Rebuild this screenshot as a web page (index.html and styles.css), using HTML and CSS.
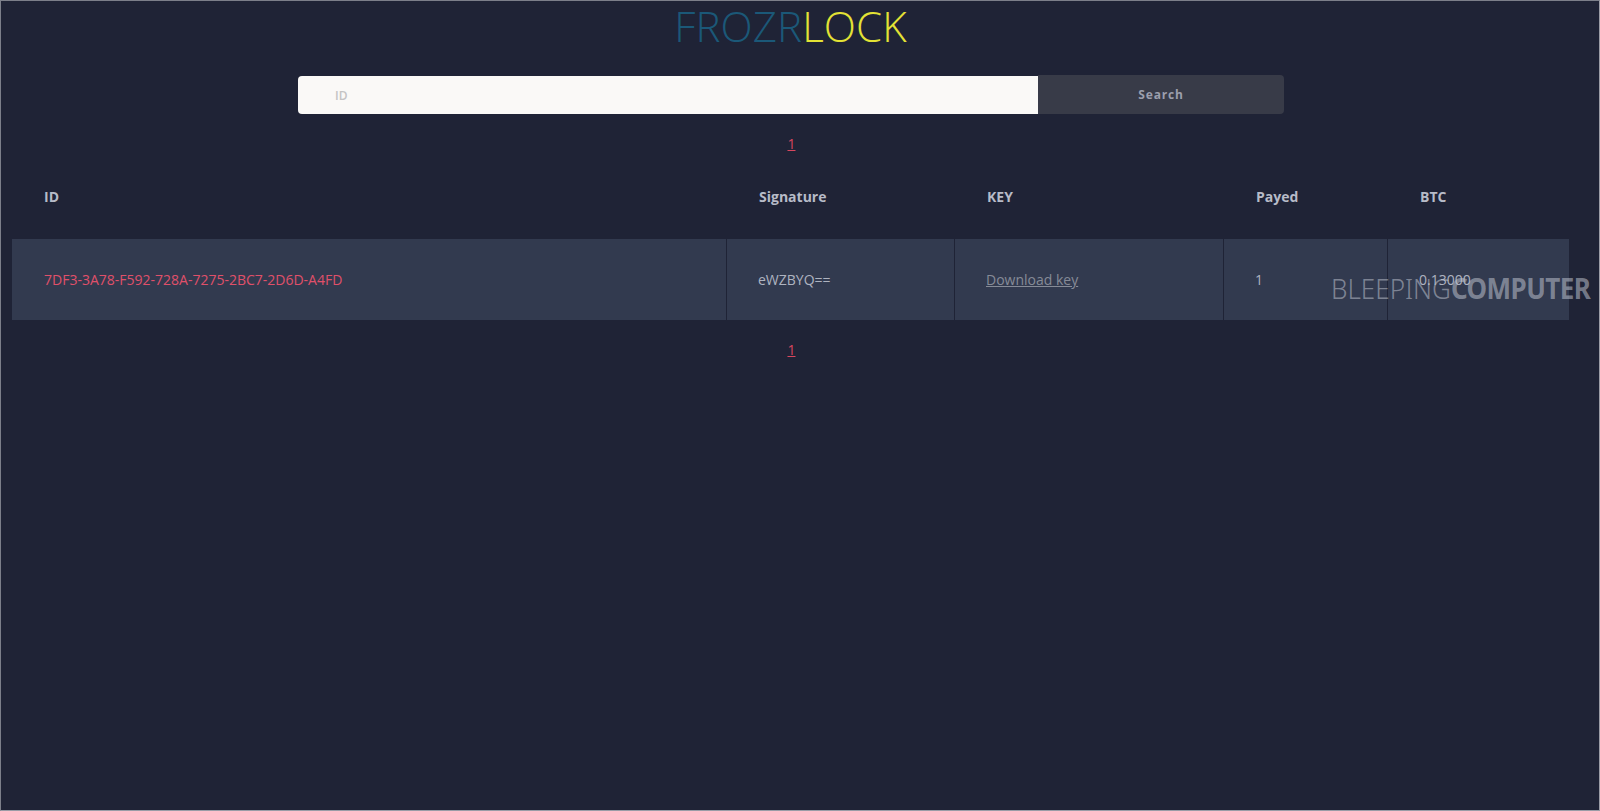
FILE: index.html
```html
<!DOCTYPE html>
<html>
<head>
<meta charset="utf-8">
<title>FrozrLock</title>
<link rel="stylesheet" href="styles.css">
</head>
<body>
<div class="frame">
  <header class="brand">
    <h1 class="logo"><span class="logo-a">FROZR</span><span class="logo-b">LOCK</span></h1>
  </header>
  <form class="search">
    <input class="search-input" type="text" placeholder="ID">
    <button class="search-btn" type="button">Search</button>
  </form>
  <nav class="pager"><a href="#">1</a></nav>
  <div class="table">
    <div class="th">ID</div>
    <div class="th">Signature</div>
    <div class="th">KEY</div>
    <div class="th">Payed</div>
    <div class="th">BTC</div>
    <div class="td id">7DF3-3A78-F592-728A-7275-2BC7-2D6D-A4FD</div>
    <div class="td">eWZBYQ==</div>
    <div class="td"><a class="dl" href="#">Download key</a></div>
    <div class="td">1</div>
    <div class="td">0.13000</div>
  </div>
  <nav class="pager pager-bottom"><a href="#">1</a></nav>
  <div class="watermark"><span class="wm-light">BLEEPING</span><span class="wm-bold">COMPUTER</span></div>
</div>
</body>
</html>
```
FILE: styles.css
```css
* { box-sizing: border-box; }
html, body { margin: 0; padding: 0; }
body {
  background: #1f2336;
  font-family: "Open Sans", "Noto Sans", sans-serif;
  width: 1600px;
  height: 811px;
  overflow: hidden;
}
.frame {
  position: relative;
  width: 1600px;
  height: 811px;
  border: 1px solid #7c7f8a;
  border-right-color: #9a9ca6;
  border-bottom-color: #9a9ca6;
  padding: 0 30px 0 11px;
}
.brand { display: flex; justify-content: center; }
.logo {
  margin: 3px 0 0;
  font-size: 42px;
  line-height: 44px;
  font-weight: 300;
  letter-spacing: 0.1px;
}
.logo-a { color: #1b5878; }
.logo-b { color: #e3e235; }
.search {
  display: flex;
  justify-content: center;
  margin: 28px 0 0 1px;
}
.search-input {
  width: 740px;
  height: 38px;
  border: 0;
  border-radius: 4px 0 0 4px;
  background: #faf9f7;
  padding: 0 0 0 37px;
  font-family: inherit;
  font-size: 12px;
  font-weight: 600;
  outline: none;
}
.search-input::placeholder { color: #c4c4c4; }
.search-btn {
  width: 246px;
  height: 39px;
  margin-top: -1px;
  border: 0;
  border-radius: 0 4px 4px 0;
  background: #383b48;
  color: #9c9fad;
  font-family: inherit;
  font-size: 12px;
  font-weight: 700;
  letter-spacing: 0.8px;
}
.pager {
  display: flex;
  justify-content: center;
  margin: 20px 0 0 2px;
  font-size: 14px;
  line-height: 19px;
}
.pager a { color: #d8475f; }
.table {
  display: grid;
  grid-template-columns: 714px 227px 268px 163px 181px;
  column-gap: 1px;
  margin-top: 22px;
}
.th {
  height: 64px;
  padding: 12px 0 0 32px;
  line-height: 19px;
  color: #b7bbc8;
  font-size: 14px;
  font-weight: 700;
}
.td {
  height: 81px;
  background: #323a4f;
  padding-left: 31px;
  display: flex;
  align-items: center;
  color: #aeb3c0;
  font-size: 14px;
}
.td.id { color: #e0506a; padding-left: 32px; }
.dl { color: #868b97; text-decoration: underline; }
.pager-bottom { margin-top: 20px; }
.watermark {
  position: absolute;
  left: 1330px;
  top: 268px;
  font-family: "Noto Sans", "Open Sans", sans-serif;
  font-size: 28px;
  line-height: 38px;
  color: rgba(190, 194, 206, 0.55);
  white-space: nowrap;
  transform: scaleX(0.93);
  transform-origin: left center;
}
.wm-light { font-weight: 300; }
.wm-bold { font-weight: 700; letter-spacing: -0.6px; }
```
